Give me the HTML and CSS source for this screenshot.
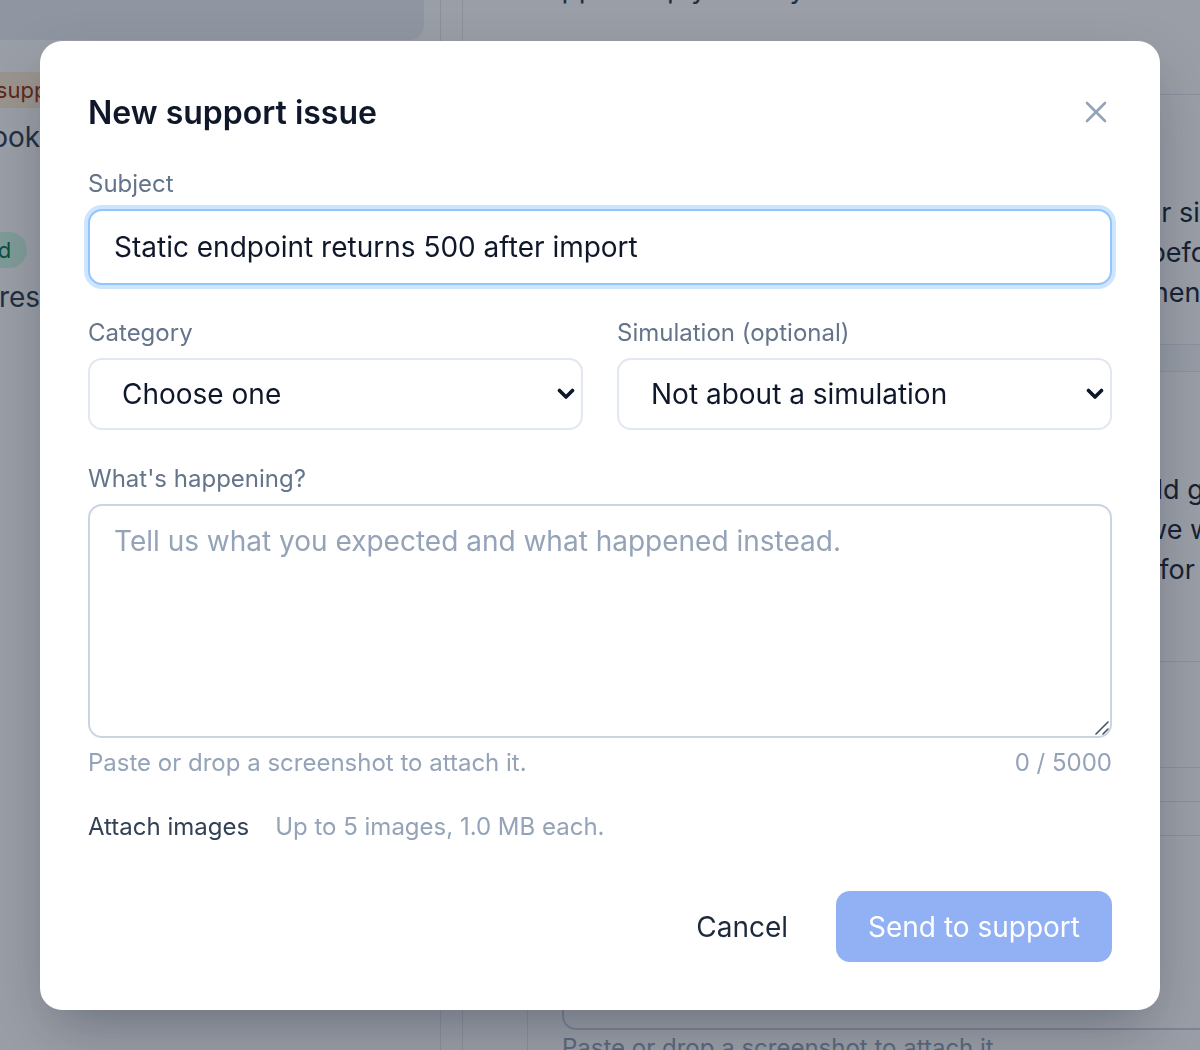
FILE: index.html
```html
<!DOCTYPE html>
<html lang="en">
<head>
    <meta charset="UTF-8">
    <meta name="viewport" content="width=device-width, initial-scale=1.0">
    <title>Support - New issue</title>
    <link rel="stylesheet" href="styles.css">
</head>
<body>
    <div class="page">
        <aside class="inbox">
            <div class="inbox-head"></div>
            <ul class="ticket-list">
                <li class="ticket">
                    <span class="badge badge-waiting">Waiting on support</span>
                    <p class="ticket-title">Webhook retries stopped</p>
                </li>
                <li class="ticket">
                    <span class="badge badge-resolved">Resolved</span>
                    <p class="ticket-title">Progress bar stuck</p>
                </li>
            </ul>
        </aside>

        <div class="rail"></div>

        <main class="thread">
            <header class="thread-head">
                <h2>Support reply history</h2>
            </header>
            <article class="message">
                <div class="message-meta">Support team</div>
                <p>Thanks for the details, we checked the logs on our side and found the requests and the retries were rejected before they reached your handler, so they were queued and then sent again an hour later.</p>
            </article>
            <div class="thread-gap"></div>
            <article class="message">
                <div class="message-meta">You</div>
                <p>Understood, thanks. Once the fix lands they should go through and we will check the queue, otherwise we will raise it here again after the next scheduled run is done for the day.</p>
            </article>
            <div class="thread-row thread-row-tall"></div>
            <div class="thread-row"></div>
            <div class="thread-row"></div>
            <div class="reply">
                <div class="reply-box"></div>
                <p class="reply-hint">Paste or drop a screenshot to attach it.</p>
            </div>
        </main>
    </div>

    <div class="overlay">
        <div class="modal" role="dialog" aria-labelledby="modal-title">
            <div class="modal-head">
                <h1 class="modal-title" id="modal-title">New support issue</h1>
                <button class="close-btn" type="button" aria-label="Close">
                    <svg width="22" height="22" viewBox="0 0 22 22" fill="none" stroke="#94a3b8" stroke-width="2.6" stroke-linecap="round">
                        <path d="M2 2 L20 20 M20 2 L2 20"/>
                    </svg>
                </button>
            </div>

            <div class="field">
                <label class="field-label" for="subject">Subject</label>
                <input class="text-input" id="subject" type="text" value="Static endpoint returns 500 after import">
            </div>

            <div class="field-row">
                <div class="field-col">
                    <label class="field-label" for="category">Category</label>
                    <div class="select-wrap">
                        <select class="select-input" id="category">
                            <option>Choose one</option>
                        </select>
                        <svg class="select-chevron" width="18" height="12" viewBox="0 0 18 12" fill="none" stroke="#0f172a" stroke-width="3.6" stroke-linecap="round" stroke-linejoin="round">
                            <path d="M2.5 2.5 L9 9 L15.5 2.5"/>
                        </svg>
                    </div>
                </div>
                <div class="field-col">
                    <label class="field-label" for="simulation">Simulation (optional)</label>
                    <div class="select-wrap">
                        <select class="select-input" id="simulation">
                            <option>Not about a simulation</option>
                        </select>
                        <svg class="select-chevron" width="18" height="12" viewBox="0 0 18 12" fill="none" stroke="#0f172a" stroke-width="3.6" stroke-linecap="round" stroke-linejoin="round">
                            <path d="M2.5 2.5 L9 9 L15.5 2.5"/>
                        </svg>
                    </div>
                </div>
            </div>

            <div class="field">
                <label class="field-label" for="details">What's happening?</label>
                <div class="textarea-wrap">
                    <textarea class="text-area" id="details" placeholder="Tell us what you expected and what happened instead."></textarea>
                    <svg class="resize-grip" width="16" height="16" viewBox="0 0 16 16" fill="none" stroke="#475569" stroke-width="1.6" stroke-linecap="round">
                        <path d="M15 3 L3 15 M15 10 L10 15"/>
                    </svg>
                </div>
                <div class="field-help">
                    <span>Paste or drop a screenshot to attach it.</span>
                    <span>0 / 5000</span>
                </div>
            </div>

            <div class="attach-row">
                <span class="attach-label">Attach images</span>
                <span class="attach-note">Up to 5 images, 1.0 MB each.</span>
            </div>

            <div class="modal-actions">
                <button class="btn btn-ghost" type="button">Cancel</button>
                <button class="btn btn-primary" type="button" disabled>Send to support</button>
            </div>
        </div>
    </div>
</body>
</html>
```

FILE: styles.css
```css
:root {
    --slate-50: #f8fafc;
    --slate-100: #eef2f7;
    --slate-200: #e2e8f0;
    --slate-300: #cbd5e1;
    --slate-400: #94a3b8;
    --slate-500: #64748b;
    --slate-700: #334155;
    --slate-800: #1e293b;
    --slate-900: #0f172a;
    --blue-focus: #93c5fd;
    --field-gap: 32px;
}

* {
    box-sizing: border-box;
}

body {
    margin: 0;
    font-family: 'Inter', 'Noto Sans', Arial, sans-serif;
    color: var(--slate-800);
    background-color: #fff;
    overflow: hidden;
}

/* ---------- page behind the dialog ---------- */

.page {
    display: grid;
    grid-template-columns: 441px 22px 1fr;
    height: 100vh;
}

.inbox {
    border-right: 1px solid var(--slate-200);
    overflow: hidden;
}

.inbox-head {
    width: 424px;
    height: 40px;
    background-color: var(--slate-100);
    border-bottom-right-radius: 14px;
}

.ticket-list {
    list-style: none;
    margin: 0 0 0 -136px;
    padding: 32px 0 0;
}

.ticket {
    padding-bottom: 75px;
}

.badge {
    display: inline-block;
    font-size: 22px;
    line-height: 36px;
    padding: 0 16px;
    border-radius: 18px;
}

.badge-waiting {
    color: #9a3412;
    background-color: #ffedd5;
}

.badge-resolved {
    margin-left: 36px;
    color: #047857;
    background-color: #d1fae5;
}

.ticket-title {
    margin: 9px 0 0;
    font-size: 28px;
    line-height: 40px;
    color: var(--slate-700);
    white-space: nowrap;
}

.ticket:first-child .ticket-title {
    margin-left: 51px;
}

.ticket:last-child .ticket-title {
    margin-left: 73px;
}

.rail {
    border-right: 1px solid var(--slate-200);
}

.thread {
    display: flex;
    flex-direction: column;
    overflow: hidden;
}

.thread > * {
    flex: none;
}

.thread-head {
    height: 95px;
    border-bottom: 1px solid var(--slate-200);
}

.thread-head h2 {
    margin: -29px 0 0 64px;
    font-size: 28px;
    font-weight: 400;
    color: var(--slate-700);
}

.message {
    padding: 40px 0 0 64px;
    height: 250px;
    border-bottom: 1px solid var(--slate-200);
}

.message-meta {
    font-size: 22px;
    line-height: 32px;
    color: var(--slate-500);
    margin-bottom: 26px;
}

.message p {
    margin: 0;
    font-size: 27px;
    line-height: 40px;
    color: var(--slate-800);
    width: 780px;
}

.thread-gap {
    height: 27px;
    border-bottom: 1px solid var(--slate-200);
    background-color: var(--slate-50);
}

.message:nth-of-type(2) {
    height: 290px;
}

.thread-row {
    height: 34px;
    border-bottom: 1px solid var(--slate-200);
}

.thread-row-tall {
    height: 106px;
}

.reply {
    margin-left: 64px;
    padding-left: 34px;
    border-left: 1px solid var(--slate-200);
}

.reply-box {
    height: 194px;
    border: 2px solid var(--slate-300);
    border-top: 0;
    border-right: 0;
    border-bottom-left-radius: 14px;
}

.reply-hint {
    margin: 2px 0 0;
    font-size: 24px;
    line-height: 32px;
    color: var(--slate-400);
}

/* ---------- dialog ---------- */

.overlay {
    position: fixed;
    inset: 0;
    background-color: rgba(15, 23, 42, 0.42);
    display: flex;
    justify-content: center;
    align-items: flex-start;
    padding-top: 41px;
}

.modal {
    width: 1120px;
    padding: 48px;
    background-color: #fff;
    border-radius: 22px;
    box-shadow: 0 24px 60px -12px rgba(15, 23, 42, 0.35);
}

.modal-head {
    display: flex;
    align-items: center;
    justify-content: space-between;
    height: 46px;
}

.modal-title {
    margin: 0;
    font-size: 32px;
    font-weight: 600;
    color: var(--slate-900);
}

.close-btn {
    width: 32px;
    height: 32px;
    padding: 0;
    border: 0;
    background: none;
    display: flex;
    align-items: center;
    justify-content: center;
    cursor: pointer;
}

.field {
    margin-top: 33px;
}

.field-label {
    display: block;
    font-size: 24px;
    line-height: 32px;
    color: var(--slate-500);
    margin-bottom: 9px;
}

.text-input,
.select-input,
.text-area {
    width: 100%;
    font-family: inherit;
    font-size: 28px;
    color: var(--slate-900);
    background-color: #fff;
    border-radius: 14px;
    outline: none;
}

.text-input {
    height: 76px;
    padding: 0 24px;
    border: 2px solid var(--blue-focus);
    box-shadow: 0 0 0 4px rgba(147, 197, 253, 0.45);
}

.field-row {
    display: grid;
    grid-template-columns: 1fr 1fr;
    gap: 34px;
    margin-top: var(--field-gap);
}

.select-wrap {
    position: relative;
}

.select-input {
    appearance: none;
    -webkit-appearance: none;
    height: 72px;
    padding: 0 60px 0 32px;
    border: 2px solid var(--slate-200);
}

.select-chevron {
    position: absolute;
    right: 8px;
    top: 30px;
    pointer-events: none;
}

.textarea-wrap {
    position: relative;
    height: 234px;
}

.text-area {
    display: block;
    height: 100%;
    padding: 16px 24px;
    line-height: 38px;
    border: 2px solid var(--slate-300);
    resize: none;
}

.text-area::placeholder {
    color: var(--slate-400);
}

.resize-grip {
    position: absolute;
    right: 3px;
    bottom: 3px;
    pointer-events: none;
}

.field-help {
    display: flex;
    justify-content: space-between;
    margin-top: 9px;
    font-size: 24px;
    line-height: 32px;
    color: var(--slate-400);
}

.attach-row {
    display: flex;
    gap: 26px;
    margin-top: var(--field-gap);
    font-size: 24px;
    line-height: 32px;
}

.attach-label {
    color: var(--slate-700);
}

.attach-note {
    color: var(--slate-400);
}

.modal-actions {
    display: flex;
    justify-content: flex-end;
    align-items: center;
    gap: 24px;
    margin-top: 48px;
}

.btn {
    height: 71px;
    border: 0;
    border-radius: 14px;
    font-family: inherit;
    font-size: 28px;
    padding: 0 32px;
    cursor: pointer;
}

.btn-ghost {
    background: none;
    color: var(--slate-800);
    padding: 0 24px;
}

.btn-primary {
    background-color: #92b1f4;
    color: #fff;
}

.btn-primary:disabled {
    cursor: default;
}
```
